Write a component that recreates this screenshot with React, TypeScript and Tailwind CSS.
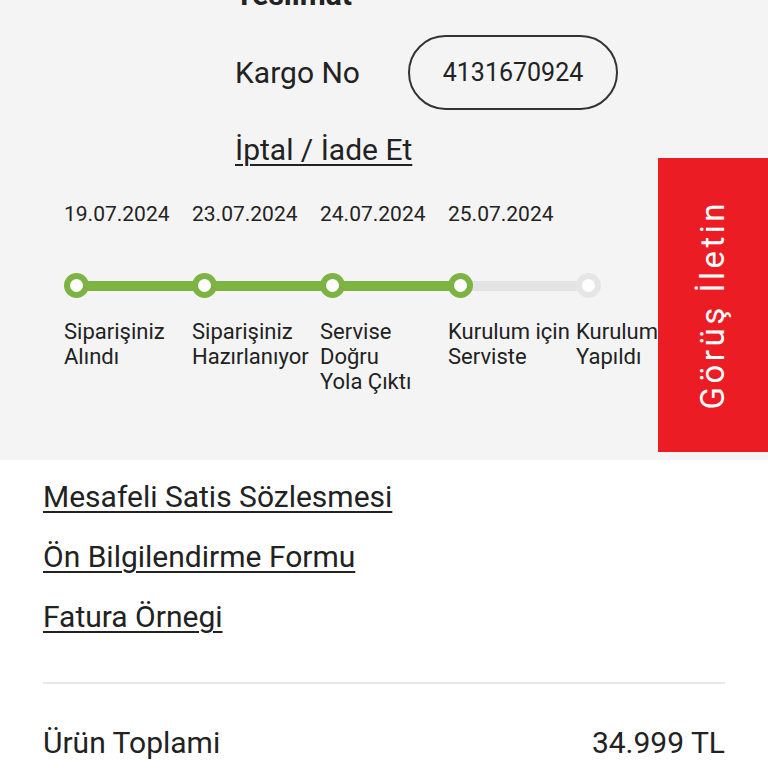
import React from 'react';

const steps = [
  { date: '19.07.2024', label: ['Siparişiniz', 'Alındı'], done: true },
  { date: '23.07.2024', label: ['Siparişiniz', 'Hazırlanıyor'], done: true },
  { date: '24.07.2024', label: ['Servise', 'Doğru', 'Yola Çıktı'], done: true },
  { date: '25.07.2024', label: ['Kurulum için', 'Serviste'], done: true },
  { date: '', label: ['Kurulum', 'Yapıldı'], done: false },
];

const App = () => {
  return (
    <div className="relative min-h-[768px] bg-white text-[#222] overflow-hidden font-['Roboto',sans-serif]">
      {/* Order status */}
      <div className="bg-[#f4f4f4] h-[460px] flow-root">
        <div className="pl-[235px]">
          <h2 className="text-[30px] font-bold leading-[34px] -mt-[22px]">Teslimat</h2>
          <div className="flex items-center mt-[23px]">
            <span className="w-[173px] text-[30px] leading-[34px]">Kargo No</span>
            <div className="w-[210px] h-[75px] rounded-full border-2 border-[#333] flex items-center justify-center text-[25px]">
              4131670924
            </div>
          </div>
          <a href="#" className="inline-block mt-[23px] text-[30px] leading-[34px] underline underline-offset-4 decoration-2">
            İptal / İade Et
          </a>
        </div>

        {/* Timeline */}
        <div className="flex pl-[64px] mt-[35px]">
          {steps.map((s, i) => {
            const next = steps[i + 1];
            return (
              <div key={i} className="w-[128px] shrink-0">
                <div className="h-[25px] text-[21px] leading-[25px]">{s.date}</div>
                <div className="relative h-[26px] mt-[46px]">
                  {next && (
                    <div
                      className={
                        next.done
                          ? 'absolute left-[12px] top-[8px] w-[128px] h-[10px] bg-[#7cb342]'
                          : 'absolute left-[12px] top-[8px] w-[128px] h-[10px] bg-[#e3e3e3]'
                      }
                    />
                  )}
                  <div
                    className={
                      s.done
                        ? 'relative w-[25px] h-[25px] rounded-full border-[6px] border-[#7cb342] bg-white'
                        : 'relative w-[25px] h-[25px] rounded-full border-[6px] border-[#e6e6e6] bg-white'
                    }
                  />
                </div>
                <div className="mt-[20px] text-[22px] leading-[25px] whitespace-nowrap">
                  {s.label.map((l) => (
                    <div key={l}>{l}</div>
                  ))}
                </div>
              </div>
            );
          })}
        </div>
      </div>

      {/* Documents */}
      <div className="px-[43px]">
        <div className="flex flex-col gap-[26px] pt-[20px] items-start">
          <a href="#" className="text-[30px] leading-[34px] underline underline-offset-4 decoration-2">Mesafeli Satis Sözlesmesi</a>
          <a href="#" className="text-[30px] leading-[34px] underline underline-offset-4 decoration-2">Ön Bilgilendirme Formu</a>
          <a href="#" className="text-[30px] leading-[34px] underline underline-offset-4 decoration-2">Fatura Örnegi</a>
        </div>
        <div className="h-[2px] bg-[#e8e8e8] mt-[48px]" />
        <div className="flex justify-between mt-[42px] text-[30px] leading-[34px]">
          <span>Ürün Toplami</span>
          <span>34.999 TL</span>
        </div>
      </div>

      {/* Feedback tab */}
      <button className="fixed right-0 top-[158px] w-[110px] h-[294px] bg-[#ec1c24] flex items-center justify-center">
        <span className="text-white text-[33px] tracking-[3.5px] [writing-mode:vertical-rl] rotate-180 whitespace-nowrap">
          Görüş İletin
        </span>
      </button>
    </div>
  );
};

export default App;
